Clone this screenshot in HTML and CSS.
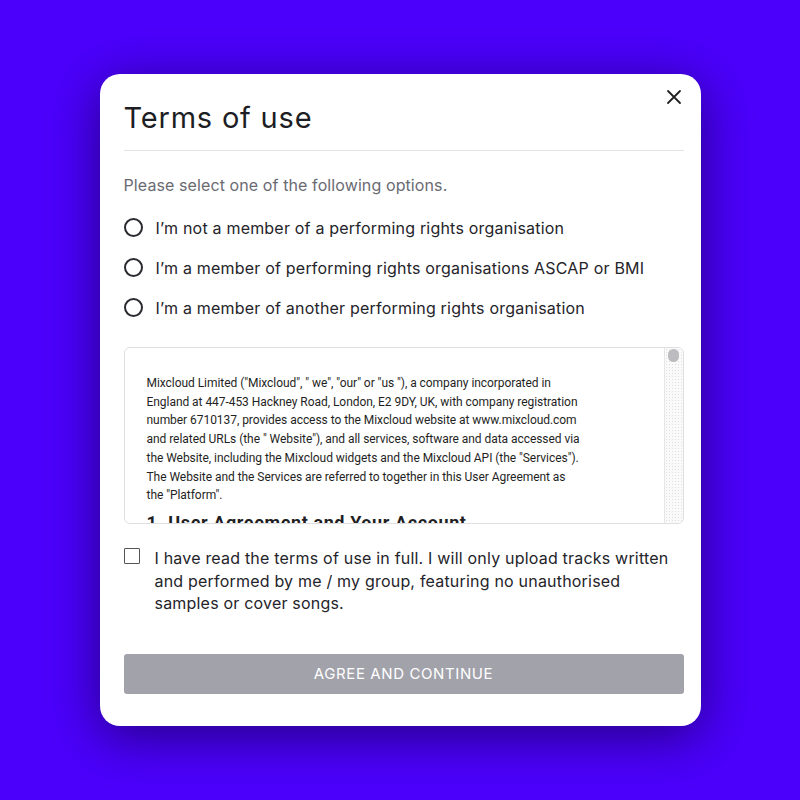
FILE: index.html
```html
<!DOCTYPE html>
<html lang="en">
<head>
<meta charset="utf-8">
<title>Terms of use</title>
<link rel="stylesheet" href="styles.css">
</head>
<body>
<div class="page">
  <div class="modal">
    <div class="modal-head">
      <h1 class="title">Terms of use</h1>
      <button class="close" aria-label="Close">
        <svg width="16" height="16" viewBox="0 0 16 16"><path d="M2 2 L14 14 M14 2 L2 14" stroke="#222" stroke-width="1.8" fill="none" stroke-linecap="round"/></svg>
      </button>
    </div>
    <p class="intro">Please select one of the following options.</p>
    <div class="options">
      <label class="option"><span class="radio"></span><span>I’m not a member of a performing rights organisation</span></label>
      <label class="option"><span class="radio"></span><span>I’m a member of performing rights organisations ASCAP or BMI</span></label>
      <label class="option"><span class="radio"></span><span>I’m a member of another performing rights organisation</span></label>
    </div>
    <div class="terms">
      <div class="terms-text">
        <p>Mixcloud Limited ("Mixcloud", " we", "our" or "us "), a company incorporated in England at 447-453 Hackney Road, London, E2 9DY, UK, with company registration number 6710137, provides access to the Mixcloud website at www.mixcloud.com and related URLs (the " Website"), and all services, software and data accessed via the Website, including the Mixcloud widgets and the Mixcloud API (the "Services"). The Website and the Services are referred to together in this User Agreement as the "Platform".</p>
        <h2>1. User Agreement and Your Account</h2>
        <p>By using the Platform you agree to be bound by this User Agreement.</p>
      </div>
      <div class="scrollbar"><div class="thumb"></div></div>
    </div>
    <label class="confirm"><span class="checkbox"></span><span>I have read the terms of use in full. I will only upload tracks written and performed by me / my group, featuring no unauthorised<br>samples or cover songs.</span></label>
    <button class="agree">AGREE AND CONTINUE</button>
  </div>
</div>
</body>
</html>
```
FILE: styles.css
```css
html, body {
  margin: 0;
  padding: 0;
}
body {
  background: #4b00fb;
  font-family: "Inter", "Liberation Sans", sans-serif;
  color: #1f1f24;
}
.page {
  width: 800px;
  height: 800px;
  display: flex;
  align-items: center;
  justify-content: center;
}
.modal {
  width: 601px;
  height: 652px;
  box-sizing: border-box;
  background: #fff;
  border-radius: 20px;
  box-shadow: 0 10px 50px rgba(25, 0, 90, 0.75);
  padding: 0 17px 0 24px;
  display: flex;
  flex-direction: column;
}
.modal-head {
  display: flex;
  justify-content: space-between;
  align-items: flex-start;
  border-bottom: 1px solid #e2e2e5;
  height: 76px;
}
.title {
  margin: 26px 0 0;
  font-size: 29px;
  font-weight: 400;
  letter-spacing: 0.8px;
  color: #1d1d24;
}
.close {
  border: 0;
  background: none;
  padding: 0;
  margin: 15px 2px 0 0;
  width: 16px;
  height: 16px;
  display: flex;
}
.intro {
  margin: 24px 0 0;
  font-size: 16px;
  letter-spacing: 0.1px;
  color: #6a6a72;
}
.options {
  margin-top: 22px;
  display: flex;
  flex-direction: column;
  gap: 19px;
}
.option {
  display: flex;
  align-items: center;
  gap: 13px;
  font-size: 16px;
  letter-spacing: 0.2px;
  color: #24242a;
  height: 21px;
}
.radio {
  width: 15px;
  height: 15px;
  border: 2px solid #2a2a30;
  border-radius: 50%;
  flex: none;
}
.terms {
  margin-top: 29px;
  height: 177px;
  box-sizing: border-box;
  border: 1px solid #dfdfe2;
  border-radius: 6px;
  display: flex;
  overflow: hidden;
}
.terms-text {
  flex: 1;
  padding: 26px 83px 0 22px;
  font-family: "Roboto", "Inter", sans-serif;
  font-size: 12px;
  letter-spacing: -0.05px;
  line-height: 18.7px;
  color: #1f1f24;
  overflow: hidden;
}
.terms-text p {
  margin: 0;
}
.terms-text h2 {
  margin: 9px 0 0;
  font-size: 18px;
  font-weight: 700;
  letter-spacing: 0.6px;
  white-space: nowrap;
}
.scrollbar {
  width: 18px;
  flex: none;
  border-left: 1px solid #e6e6e8;
  background-color: #fafafa;
  background-image: radial-gradient(#e0e0e0 0.6px, transparent 0.8px);
  background-size: 3px 3px;
  padding-top: 1px;
  display: flex;
  justify-content: center;
}
.thumb {
  width: 11px;
  height: 13px;
  border-radius: 6px;
  background: #bcbcc0;
}
.confirm {
  margin-top: 23px;
  display: flex;
  align-items: flex-start;
  gap: 15px;
  font-size: 16px;
  letter-spacing: 0.2px;
  line-height: 22.5px;
  color: #24242a;
}
.checkbox {
  width: 14px;
  height: 14px;
  border: 1.5px solid #555;
  border-radius: 1px;
  flex: none;
  margin-top: 1px;
}
.agree {
  margin-top: 39px;
  height: 40px;
  border: 0;
  border-radius: 3px;
  background: #a2a2aa;
  color: #fff;
  font-family: inherit;
  font-size: 15px;
  letter-spacing: 0.6px;
  width: 100%;
}
```
